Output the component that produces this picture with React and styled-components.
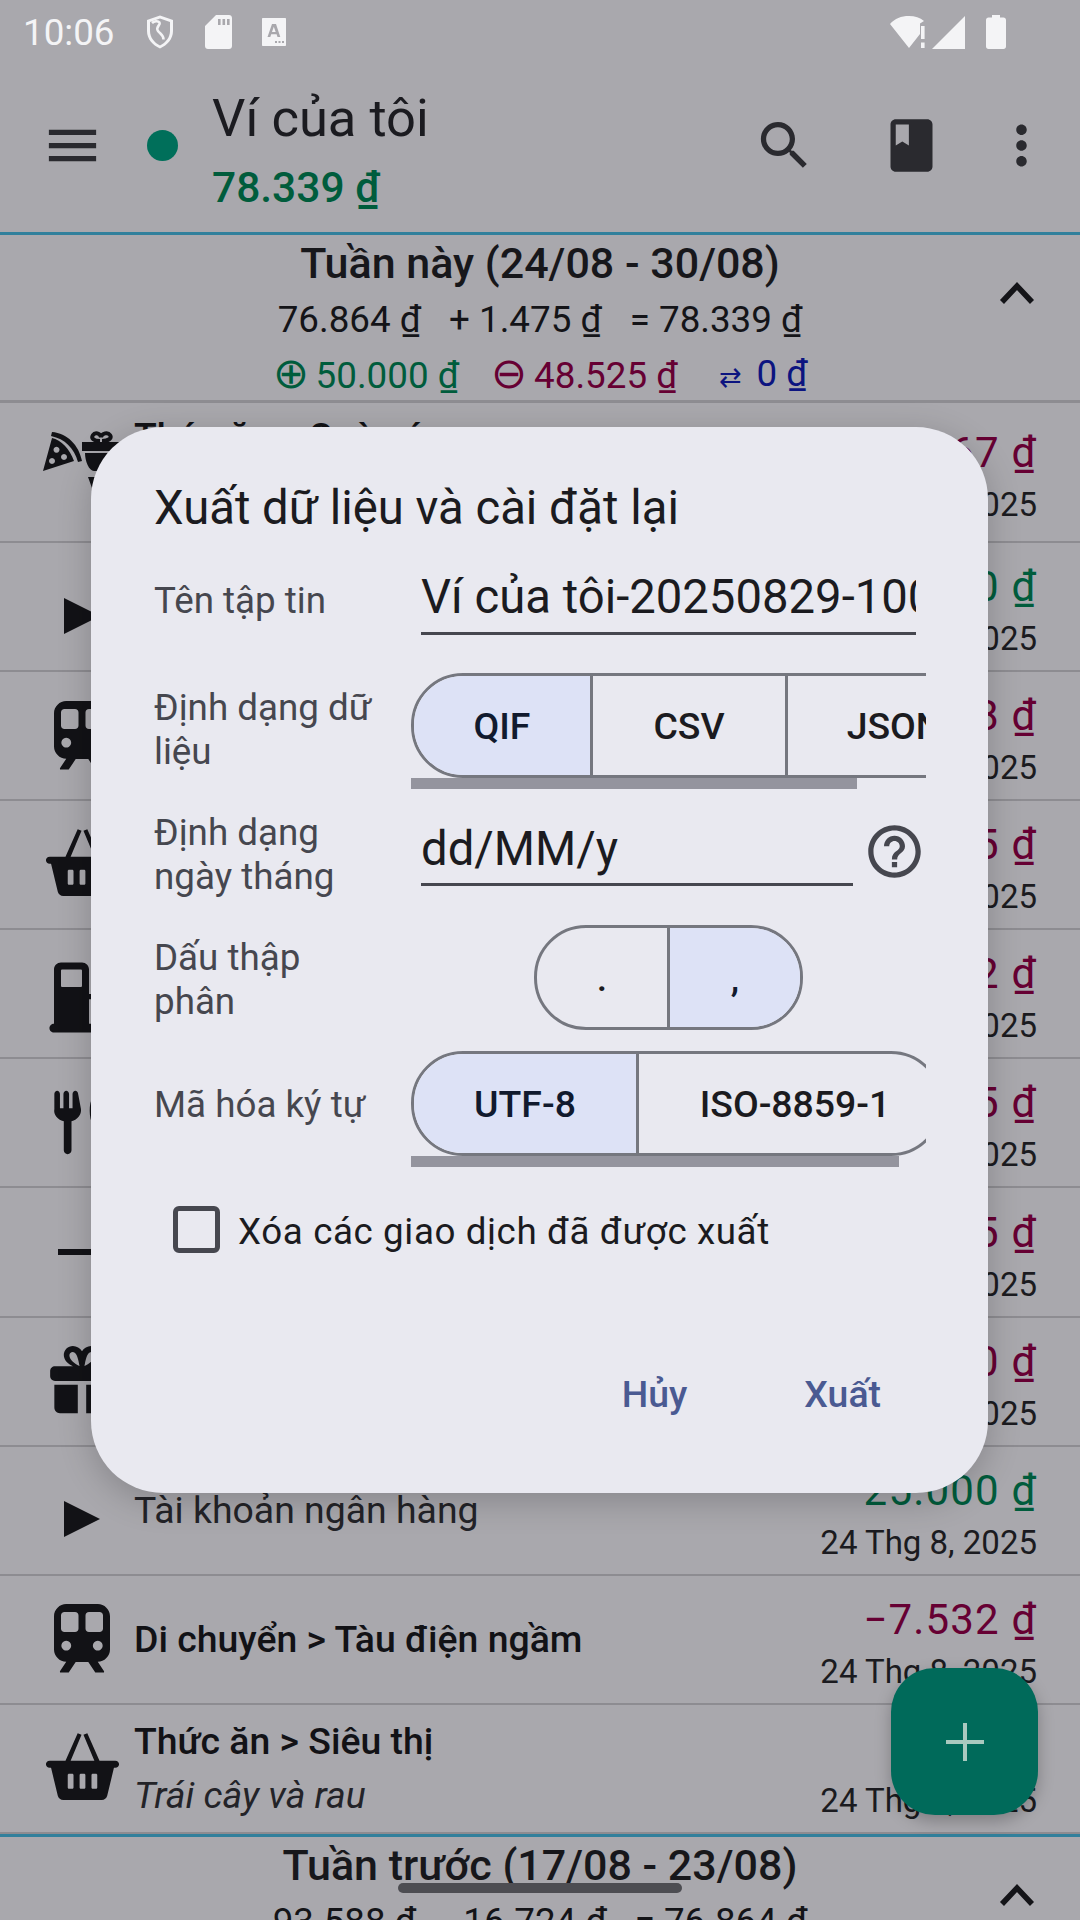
import styled, { createGlobalStyle } from 'styled-components'

const GlobalStyle = createGlobalStyle`
  html, body { margin: 0; padding: 0; background: #a9a8ad; }
  * { box-sizing: border-box; }
`

const Screen = styled.div`
  position: relative;
  width: 1080px;
  height: 1920px;
  overflow: hidden;
  background: #a9a8ad;
  color: #141418;
  font-family: Roboto, "Noto Sans", sans-serif;
`

const StatusBar = styled.div`
  height: 66px;
  display: flex;
  align-items: center;
  justify-content: space-between;
  padding: 0 74px 2px 23px;
  color: #f4f4f6;
`

const StatusGroup = styled.div`
  display: flex;
  align-items: center;
  gap: ${({ $gap }) => $gap || 0}px;
`

const Time = styled.span`
  font-size: 36.75px;
`

const BatterySlot = styled.div`
  margin-left: 17px;
`

const Toolbar = styled.header`
  height: 169px;
  display: flex;
  align-items: center;
  padding: 0 27px 8px 41px;
  border-bottom: 3px solid #31809c;
  color: #2a2a2f;
`

const Dot = styled.span`
  width: 31px;
  height: 31px;
  border-radius: 50%;
  background: #006f5a;
  margin: 0 34px 0 43px;
`

const WalletInfo = styled.div`
  flex: 1;
  display: flex;
  flex-direction: column;
  margin-top: 7px;
`

const WalletName = styled.div`
  font-size: 52.5px;
  line-height: 70px;
  color: #1b1b20;
`

const WalletAmount = styled.div`
  font-size: 42.5px;
  font-weight: 500;
  line-height: 52px;
  color: #005c3c;
  margin-top: 9px;
`

const ToolbarIcons = styled.div`
  display: flex;
  align-items: center;
  gap: 64px;
  & > :last-child {
    margin-left: -17px;
  }
`

const IconSvg = styled.svg`
  display: block;
  flex: none;
  fill: currentColor;
`

const WeekHeader = styled.section`
  position: relative;
  display: flex;
  flex-direction: column;
  align-items: center;
  height: ${({ $accent }) => ($accent ? 170 : 168)}px;
  border-top: ${({ $accent }) => ($accent ? '3px solid #31809c' : '0')};
  border-bottom: 3px solid #8d8c91;
  padding-top: 3px;
`

const WeekTitle = styled.div`
  font-size: 43px;
  font-weight: 500;
  line-height: 50px;
  color: #17171b;
`

const WeekLine = styled.div`
  display: flex;
  align-items: center;
  gap: ${({ $gap }) => $gap}px;
  font-size: 36.75px;
  line-height: 54px;
  margin-top: ${({ $mt }) => $mt || 0}px;
`

const Money = styled.span`
  margin-left: ${({ $push }) => $push || 0}px;
  color: ${({ $tone }) => ({ plus: '#005c3c', minus: '#660033', move: '#0c1480' }[$tone] || '#1b1b20')};
`

const SignGlyph = styled.span`
  font-size: 43px;
  line-height: 1;
  margin-right: -2px;
`

const SmallGlyph = styled.span`
  font-size: 27px;
  margin-right: 14px;
`

const Chevron = styled.svg`
  position: absolute;
  right: 45px;
  top: 46px;
  width: 36px;
  height: 24px;
  fill: none;
  stroke: #141418;
  stroke-width: 5.5;
`

const Row = styled.article`
  height: ${({ $h }) => $h || 129.1}px;
  display: flex;
  align-items: center;
  padding: 0 43px 0 40px;
  border-bottom: 2px solid #8d8c91;
`

const RowIcon = styled.div`
  width: 84px;
  height: 84px;
  flex: none;
  display: flex;
  align-items: center;
  justify-content: center;
  margin: ${({ $drop }) => $drop || 0}px 10px 0 0;
  color: #121216;
`

const RowText = styled.div`
  flex: 1;
  min-width: 0;
  display: flex;
  flex-direction: column;
  gap: 8px;
  margin-bottom: ${({ $lift }) => $lift || 0}px;
`

const RowTitle = styled.div`
  font-size: 37.4px;
  line-height: 46px;
  font-weight: ${({ $plain }) => ($plain ? 400 : 500)};
  color: ${({ $plain }) => ($plain ? '#232328' : '#121216')};
  white-space: nowrap;
`

const RowNote = styled.div`
  font-size: 37.4px;
  line-height: 46px;
  font-style: italic;
  color: #232328;
`

const RowRight = styled.div`
  display: flex;
  flex-direction: column;
  align-items: flex-end;
  margin-top: 13px;
`

const Amount = styled.div`
  font-size: 42px;
  line-height: 52px;
  letter-spacing: 1.2px;
  color: ${({ $tone }) => ($tone === 'plus' ? '#005c3c' : '#660033')};
`

const RowDate = styled.div`
  font-size: 33px;
  line-height: 52px;
  color: #1b1b20;
`

const Fab = styled.button`
  position: absolute;
  left: 891px;
  top: 1668px;
  width: 147px;
  height: 147px;
  border: 0;
  border-radius: 44px;
  background: #006a5a;
  color: #a9c9bf;
  display: flex;
  align-items: center;
  justify-content: center;
  box-shadow: 0 6px 16px rgba(0, 0, 0, 0.25);
`

const GesturePill = styled.div`
  position: absolute;
  left: 398px;
  top: 1883px;
  width: 284px;
  height: 10px;
  border-radius: 5px;
  background: #4d4d52;
`

const Dialog = styled.div`
  position: absolute;
  left: 91px;
  top: 427px;
  width: 897px;
  height: 1066px;
  display: flex;
  flex-direction: column;
  padding: 53px 62px 69px 63px;
  border-radius: 72px;
  background: #e9e9f0;
  box-shadow: 0 8px 34px rgba(0, 0, 0, 0.2);
`

const DialogTitle = styled.h2`
  margin: 0;
  font-size: 47.25px;
  font-weight: 400;
  line-height: 56px;
  color: #1b1b20;
`

const Field = styled.div`
  display: flex;
  align-items: ${({ $align }) => $align || 'center'};
  height: ${({ $h }) => $h}px;
  margin-top: ${({ $mt }) => $mt}px;
`

const FieldLabel = styled.div`
  width: 222px;
  margin: ${({ $top }) => $top || 0}px 35px ${({ $bottom }) => $bottom || 0}px 0;
  flex: none;
  font-size: 36.75px;
  line-height: 43.5px;
  color: #46474f;
`

const TextInput = styled.div`
  width: ${({ $w }) => $w}px;
  height: ${({ $h }) => $h}px;
  margin-left: 10px;
  padding-top: 4px;
  border-bottom: 3px solid #46474f;
  font-size: 47.25px;
  line-height: 68px;
  color: #1b1b20;
  white-space: nowrap;
  overflow: hidden;
`

const HelpIcon = styled.div`
  margin: 9px 0 0 10px;
  color: #46474f;
`

const ToggleScroller = styled.div`
  flex: 1;
  min-width: 0;
  overflow: hidden;
  display: flex;
  flex-direction: column;
  align-self: stretch;
`

const ToggleGroup = styled.div`
  display: flex;
  flex: none;
  width: max-content;
  height: 105px;
  border: 3px solid #75777f;
  border-radius: 52px;
  overflow: hidden;
  margin-left: ${({ $indent }) => $indent || 0}px;
`

const Segment = styled.div`
  width: ${({ $w }) => $w}px;
  flex: none;
  display: flex;
  align-items: center;
  justify-content: center;
  padding-left: ${({ $inset }) => $inset || 0}px;
  background: ${({ $on }) => ($on ? '#dde2f6' : 'transparent')};
  border-left: ${({ $first }) => ($first ? '0' : '3px solid #75777f')};
  font-size: 37.4px;
  font-weight: 500;
  color: ${({ $on }) => ($on ? '#111a2e' : '#1b1b20')};
`

const ScrollThumb = styled.div`
  width: ${({ $w }) => $w}px;
  height: 11px;
  flex: none;
  background: #94949e;
`

const CheckRow = styled.div`
  display: flex;
  align-items: center;
  margin: 39px 0 0 19px;
  height: 47px;
`

const CheckBox = styled.div`
  width: 47px;
  height: 47px;
  border: 5px solid #46474f;
  border-radius: 6px;
  margin-right: 18px;
`

const CheckLabel = styled.div`
  font-size: 36.75px;
  letter-spacing: 0.6px;
  color: #1b1b20;
  padding-top: 4px;
`

const Actions = styled.div`
  margin-top: auto;
  height: 60px;
  display: flex;
  justify-content: flex-end;
  align-items: center;
  gap: 117px;
  padding-right: 45px;
`

const ActionButton = styled.div`
  font-size: 37.4px;
  font-weight: 500;
  color: #4a5a92;
`

const Icon = ({ d, size = 63, view = 24 }) => (
  <IconSvg width={size} height={size} viewBox={`0 0 ${view} ${view}`}>
    <path d={d} fillRule="evenodd" />
  </IconSvg>
)

const paths = {
  menu: 'M3 18h18v-2H3v2zm0-5h18v-2H3v2zm0-7v2h18V6H3z',
  search: 'M15.5 14h-.79l-.28-.27C15.41 12.59 16 11.11 16 9.5 16 5.91 13.09 3 9.5 3S3 5.91 3 9.5 5.91 16 9.5 16c1.61 0 3.09-.59 4.23-1.57l.27.28v.79l5 4.99L20.49 19l-4.99-5zm-6 0C7.01 14 5 11.99 5 9.5S7.01 5 9.5 5 14 7.01 14 9.5 11.99 14 9.5 14z',
  book: 'M18 2H6c-1.1 0-2 .9-2 2v16c0 1.1.9 2 2 2h12c1.1 0 2-.9 2-2V4c0-1.1-.9-2-2-2zM6 4h5v8l-2.5-1.5L6 12V4z',
  more: 'M12 8c1.1 0 2-.9 2-2s-.9-2-2-2-2 .9-2 2 .9 2 2 2zm0 2c-1.1 0-2 .9-2 2s.9 2 2 2 2-.9 2-2-.9-2-2-2zm0 6c-1.1 0-2 .9-2 2s.9 2 2 2 2-.9 2-2-.9-2-2-2z',
  help: 'M11 18h2v-2h-2v2zm1-16C6.48 2 2 6.48 2 12s4.48 10 10 10 10-4.48 10-10S17.52 2 12 2zm0 18c-4.41 0-8-3.59-8-8s3.59-8 8-8 8 3.59 8 8-3.59 8-8 8zm0-14c-2.21 0-4 1.79-4 4h2c0-1.1.9-2 2-2s2 .9 2 2c0 2-3 1.75-3 5h2c0-2.25 3-2.5 3-5 0-2.21-1.79-4-4-4z',
  train: 'M7.5 2h9C18.4 2 20 3.6 20 5.5V15c0 1.9-1.6 3.500-3.500 3.500l1.800 2.700v.4h-2.500l-2-3h-3.600l-2 3H5.700v-.4l1.800-2.700C5.600 18.500 4 16.900 4 15V5.500C4 3.600 5.600 2 7.500 2zM7 4.300c-.6 0-1 .4-1 1V9c0 .6.4 1 1 1h3c.6 0 1-.4 1-1V5.300c0-.6-.4-1-1-1zM14 4.300c-.6 0-1 .4-1 1V9c0 .6.4 1 1 1h3c.6 0 1-.4 1-1V5.300c0-.6-.4-1-1-1zM7.500 12.500a1.400 1.400 0 1 0 .01 0zM16.500 12.500a1.400 1.400 0 1 0 .01 0z',
  basket: 'M1.800 9.600h20.400c.7 0 1.200.5 1.200 1.100s-.5 1.100-1.200 1.100h-.4l-2.100 8.700c-.2.8-.9 1.300-1.700 1.300H6c-.8 0-1.500-.5-1.700-1.300l-2.100-8.700h-.4c-.7 0-1.200-.5-1.200-1.100s.5-1.100 1.200-1.100zM6.700 9.600 10.500 1l1.200.5-3.400 8.100zM17.300 9.600 13.500 1l-1.200.5 3.400 8.100zM7.800 13.600h1c.2 0 .4.2.4.4v3.900c0 .2-.2.4-.4.4h-1c-.2 0-.4-.2-.4-.4V14c0-.2.2-.4.4-.4zM11.500 13.600h1c.2 0 .4.2.4.4v3.900c0 .2-.2.4-.4.4h-1c-.2 0-.4-.2-.4-.4V14c0-.2.2-.4.4-.4zM15.200 13.600h1c.2 0 .4.2.4.4v3.900c0 .2-.2.4-.4.4h-1c-.2 0-.4-.2-.4-.4V14c0-.2.2-.4.4-.4z',
  fuel: 'M6 3h6c1.100 0 2 .9 2 2v7h2v1.500h-2v7h1.200c.7 0 1.300.6 1.300 1.250S17.900 23 17.200 23H4c-.7 0-1.300-.6-1.300-1.250S3.300 20.500 4 20.500V5c0-1.100.9-2 2-2zM6.300 5c-.2 0-.3.1-.3.3v4.400c0 .2.1.3.3.3h5.400c.2 0 .3-.1.3-.3V5.300c0-.2-.1-.3-.3-.3z',
  fork: 'M4.100 3.700c0-.5.400-.9.800-.9s.8.400.8.900v4.100h1V3.700c0-.5.400-.9.800-.9s.8.400.8.900v4.100h1V3.700c0-.5.400-.9.800-.9s.8.400.8.900l.8 4.300c.2 1.600-.9 3-2.700 3.500v8.300c0 .6-.5 1.100-1.100 1.100s-1.100-.5-1.100-1.100v-8.300C4.900 11 3.800 9.600 4.100 8zM17 3c1.600 0 2.800 2.500 2.800 5.500S18.600 14 17 14s-2.800-2.500-2.800-5.500S15.400 3 17 3z',
  gift: 'M4.300 7.800h5.100C8 7.200 6.800 6 6.800 4.600 6.800 3.100 8 2 9.400 2c1.100 0 2 .6 2.600 1.500C12.600 2.600 13.500 2 14.600 2c1.400 0 2.600 1.100 2.600 2.600 0 1.400-1.200 2.600-2.600 3.200h5.100c.8 0 1.400.6 1.400 1.400v1.400c0 .8-.6 1.400-1.400 1.400H4.300c-.8 0-1.400-.6-1.400-1.400V9.200c0-.8.6-1.400 1.400-1.400zM9.400 3.700c-.6 0-1 .4-1 1 0 1.200 1.700 2.500 2.900 3C11 6.200 10.600 3.700 9.400 3.700zM14.600 3.700c-1.200 0-1.600 2.500-1.900 4 1.200-.5 2.900-1.800 2.900-3 0-.6-.4-1-1-1zM4.100 13.100h6.700v8.100H5.700c-.9 0-1.600-.7-1.600-1.600zM13.200 13.100h6.700v6.500c0 .9-.7 1.600-1.600 1.600h-5.100z',
}

const ShieldIcon = () => (
  <IconSvg width={30} height={36} viewBox="0 0 30 36">
    <path d="M15 1.500 28 6v11c0 8-5.500 14-13 17.500C7.500 31 2 25 2 17V6zM15 4.500 5 8v9c0 6.500 4.300 11.500 10 14.500 5.700-3 10-8 10-14.500V8z" fillRule="evenodd" />
    <path d="M7 9c2-2 6-2.500 7.500-.5C16 11 10 13 13 17c2 2.800 5.500 3.500 5.500 8.500" fill="none" stroke="currentColor" strokeWidth="2.600" />
  </IconSvg>
)

const SdIcon = () => (
  <IconSvg width={27} height={34} viewBox="0 0 27 34">
    <path d="M11 0h13c1.700 0 3 1.300 3 3v28c0 1.700-1.300 3-3 3H3c-1.700 0-3-1.300-3-3V11zM13 4v6h2.600V4zM17.500 4v6h2.600V4zM22 4v6h2.600V4z" fillRule="evenodd" />
  </IconSvg>
)

const KeyboardIcon = () => (
  <IconSvg width={24} height={28} viewBox="0 0 24 28">
    <path d="M1 0h22c.6 0 1 .4 1 1v26c0 .6-.4 1-1 1H1c-.6 0-1-.4-1-1V1c0-.6.4-1 1-1zM10 6 5.500 19h2.800l.9-2.800h5.400l.9 2.800h2.800L14 6zM11.800 8.800l1.900 5.300H10zM13 23v2h2v-2zM16.500 23v2h2v-2zM20 23v2h2v-2z" fillRule="evenodd" />
  </IconSvg>
)

const WifiIcon = () => (
  <IconSvg width={38} height={34} viewBox="0 0 38 34">
    <path d="M0 9C5 3.500 11 1 19 1c6 0 11 1.500 15 5l-4 2.500V19l-11 14z" />
    <path d="M31 11h3.600v13H31zM31 27.500h3.600V33H31z" />
  </IconSvg>
)

const SignalIcon = () => (
  <IconSvg width={33} height={33} viewBox="0 0 33 33">
    <path d="M33 0v33H0z" />
  </IconSvg>
)

const BatteryIcon = () => (
  <IconSvg width={20} height={34} viewBox="0 0 20 34">
    <path d="M6 0h8v2.500h3.500c1.400 0 2.500 1.100 2.500 2.500v26.500c0 1.400-1.100 2.500-2.500 2.500h-15C1.100 34 0 32.900 0 31.500V5c0-1.400 1.100-2.500 2.500-2.500H6z" />
  </IconSvg>
)

const PizzaGiftIcon = () => (
  <IconSvg width={84} height={58} viewBox="0 0 84 58">
    <path d="M3 40 12 7c9 2 18 11 22 23zM16.500 15.700a3 3 0 1 0 .01 0zM12 27a3 3 0 1 0 .01 0zM24 23a3 3 0 1 0 .01 0z" fillRule="evenodd" />
    <path d="M12 1c15 1 27 13 30 29l-4 1C34 17 25 8 11 5z" />
    <path d="M42 11h42v9H42zM45 22h39v18H54c-5 0-9-10-9-18zM48 46h36v11H52z" />
    <path d="M60 10c-7 0-9-3-7-6 2-3 7-2 8 2 1-4 7-5 9-2 2 3-1 6-8 6" fill="none" stroke="currentColor" strokeWidth="4" />
  </IconSvg>
)

const PlayIcon = () => (
  <IconSvg width={36} height={36} viewBox="0 0 36 36">
    <path d="M0 0 36 18 0 36z" />
  </IconSvg>
)

const DashIcon = () => (
  <IconSvg width={84} height={84} viewBox="0 0 84 84">
    <path d="M18 39h66v6H18z" />
  </IconSvg>
)

const PlusIcon = () => (
  <IconSvg width={38} height={38} viewBox="0 0 38 38">
    <path d="M17 0h4v17h17v4H21v17h-4V21H0v-4h17z" />
  </IconSvg>
)

const rows = [
  { icon: <PizzaGiftIcon />, title: 'Thức ăn > Quà cáp', note: 'Sinh nhật', amount: '−12.467 ₫', date: '30 Thg 8, 2025', h: 140, iconDrop: -24, lift: 18 },
  { icon: <PlayIcon />, title: 'Tài khoản ngân hàng', plain: true, amount: '50.000 ₫', tone: 'plus', date: '29 Thg 8, 2025', iconDrop: 18 },
  { icon: <Icon d={paths.train} size={84} />, title: 'Di chuyển > Tàu điện ngầm', amount: '−7.538 ₫', date: '28 Thg 8, 2025' },
  { icon: <Icon d={paths.basket} size={77} />, title: 'Thức ăn > Siêu thị', note: 'Sữa', amount: '−8.125 ₫', date: '27 Thg 8, 2025' },
  { icon: <Icon d={paths.fuel} size={84} />, title: 'Di chuyển > Xăng', amount: '−4.552 ₫', date: '26 Thg 8, 2025' },
  { icon: <Icon d={paths.fork} size={84} />, title: 'Thức ăn > Nhà hàng', amount: '−3.415 ₫', date: '26 Thg 8, 2025' },
  { icon: <DashIcon />, title: 'Khác', amount: '−1.225 ₫', date: '25 Thg 8, 2025' },
  { icon: <Icon d={paths.gift} size={84} />, title: 'Quà cáp', amount: '−1.700 ₫', date: '25 Thg 8, 2025' },
  { icon: <PlayIcon />, title: 'Tài khoản ngân hàng', plain: true, amount: '25.000 ₫', tone: 'plus', date: '24 Thg 8, 2025', iconDrop: 18 },
  { icon: <Icon d={paths.train} size={84} />, title: 'Di chuyển > Tàu điện ngầm', amount: '−7.532 ₫', date: '24 Thg 8, 2025' },
  { icon: <Icon d={paths.basket} size={77} />, title: 'Thức ăn > Siêu thị', note: 'Trái cây và rau', amount: '−116 ₫', date: '24 Thg 8, 2025' },
]

const App = () => (
  <Screen>
    <GlobalStyle />
    <StatusBar>
      <StatusGroup $gap={30}>
        <Time>10:06</Time>
        <ShieldIcon />
        <SdIcon />
        <KeyboardIcon />
      </StatusGroup>
      <StatusGroup $gap={4}>
        <WifiIcon />
        <SignalIcon />
        <BatterySlot><BatteryIcon /></BatterySlot>
      </StatusGroup>
    </StatusBar>

    <Toolbar>
      <Icon d={paths.menu} />
      <Dot />
      <WalletInfo>
        <WalletName>Ví của tôi</WalletName>
        <WalletAmount>78.339 ₫</WalletAmount>
      </WalletInfo>
      <ToolbarIcons>
        <Icon d={paths.search} />
        <Icon d={paths.book} />
        <Icon d={paths.more} />
      </ToolbarIcons>
    </Toolbar>

    <WeekHeader>
      <WeekTitle>Tuần này (24/08 - 30/08)</WeekTitle>
      <WeekLine $gap={28} $mt={5}>
        <span>76.864 ₫</span>
        <span>+ 1.475 ₫</span>
        <span>= 78.339 ₫</span>
      </WeekLine>
      <WeekLine $gap={32}>
        <Money $tone="plus"><SignGlyph>⊕</SignGlyph> 50.000 ₫</Money>
        <Money $tone="minus"><SignGlyph>⊖</SignGlyph> 48.525 ₫</Money>
        <Money $tone="move" $push={10}><SmallGlyph>⇄</SmallGlyph>0 ₫</Money>
      </WeekLine>
      <Chevron viewBox="0 0 36 24"><path d="M3 21 18 5l15 16" /></Chevron>
    </WeekHeader>

    {rows.map((row, i) => (
      <Row key={i} $h={row.h}>
        <RowIcon $drop={row.iconDrop}>{row.icon}</RowIcon>
        <RowText $lift={row.lift}>
          <RowTitle $plain={row.plain}>{row.title}</RowTitle>
          {row.note && <RowNote>{row.note}</RowNote>}
        </RowText>
        <RowRight>
          <Amount $tone={row.tone}>{row.amount}</Amount>
          <RowDate>{row.date}</RowDate>
        </RowRight>
      </Row>
    ))}

    <WeekHeader $accent>
      <WeekTitle>Tuần trước (17/08 - 23/08)</WeekTitle>
      <WeekLine $gap={28} $mt={5}>
        <span>93.588 ₫</span>
        <span>- 16.724 ₫</span>
        <span>= 76.864 ₫</span>
      </WeekLine>
      <Chevron viewBox="0 0 36 24"><path d="M3 21 18 5l15 16" /></Chevron>
    </WeekHeader>

    <Fab><PlusIcon /></Fab>
    <GesturePill />

    <Dialog>
      <DialogTitle>Xuất dữ liệu và cài đặt lại</DialogTitle>
      <Field $h={76} $mt={23}>
        <FieldLabel $top={8}>Tên tập tin</FieldLabel>
        <TextInput $w={495} $h={76}>Ví của tôi-20250829-100612</TextInput>
      </Field>
      <Field $h={116} $mt={38} $align="flex-start">
        <FieldLabel $top={13}>Định dạng dữ liệu</FieldLabel>
        <ToggleScroller>
          <ToggleGroup>
            <Segment $on $first $w={176}>QIF</Segment>
            <Segment $w={195}>CSV</Segment>
            <Segment $w={216}>JSON</Segment>
          </ToggleGroup>
          <ScrollThumb $w={446} />
        </ToggleScroller>
      </Field>
      <Field $h={85} $mt={22} $align="flex-start">
        <FieldLabel>Định dạng ngày tháng</FieldLabel>
        <TextInput $w={432} $h={75}>dd/MM/y</TextInput>
        <HelpIcon><Icon d={paths.help} /></HelpIcon>
      </Field>
      <Field $h={105} $mt={29}>
        <FieldLabel $top={4}>Dấu thập phân</FieldLabel>
        <ToggleScroller>
          <ToggleGroup $indent={123}>
            <Segment $first $w={130}>.</Segment>
            <Segment $on $w={133}>,</Segment>
          </ToggleGroup>
        </ToggleScroller>
      </Field>
      <Field $h={116} $mt={21}>
        <FieldLabel $bottom={8}>Mã hóa ký tự</FieldLabel>
        <ToggleScroller>
          <ToggleGroup>
            <Segment $on $first $w={222}>UTF-8</Segment>
            <Segment $w={304} $inset={11}>ISO-8859-1</Segment>
          </ToggleGroup>
          <ScrollThumb $w={488} />
        </ToggleScroller>
      </Field>
      <CheckRow>
        <CheckBox />
        <CheckLabel>Xóa các giao dịch đã được xuất</CheckLabel>
      </CheckRow>
      <Actions>
        <ActionButton>Hủy</ActionButton>
        <ActionButton>Xuất</ActionButton>
      </Actions>
    </Dialog>
  </Screen>
)

export default App
